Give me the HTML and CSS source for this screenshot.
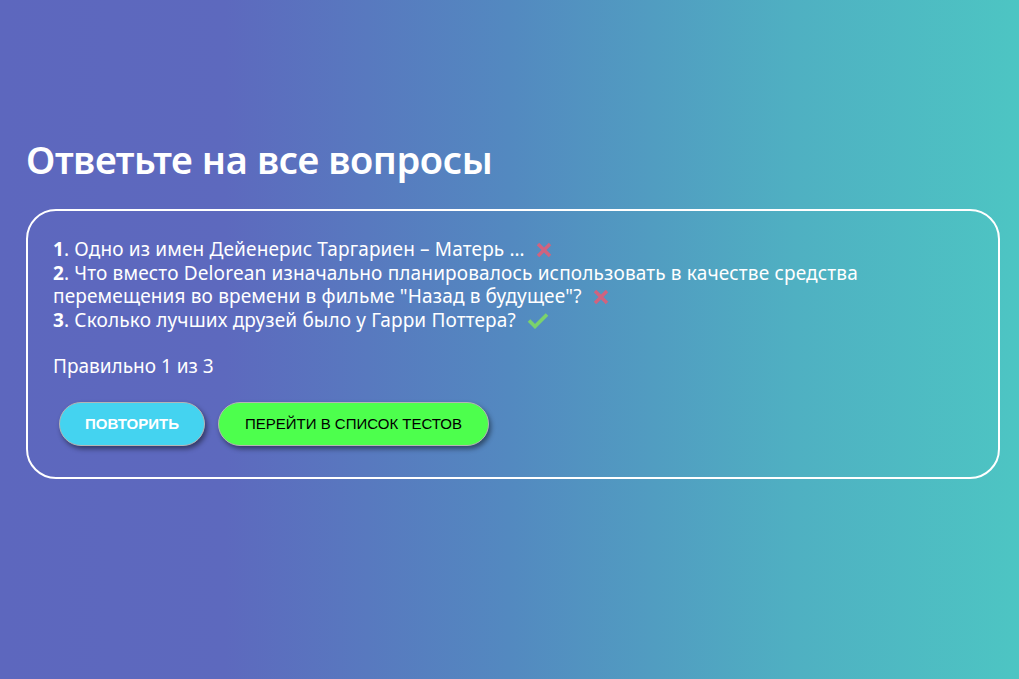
FILE: index.html
```html
<!DOCTYPE html>
<html lang="ru">
<head>
<meta charset="utf-8">
<title>Ответьте на все вопросы</title>
<link rel="stylesheet" href="styles.css">
</head>
<body>
<main class="page">
  <h1 class="title">Ответьте на все вопросы</h1>
  <section class="result">
    <ol class="answers">
      <li><b>1</b>. Одно из имен Дейенерис Таргариен – Матерь … <svg class="mark" viewBox="0 0 16 16" width="16" height="16"><path d="M2 2L14 14M14 2L2 14" stroke="#d0637f" stroke-width="3.4" stroke-linecap="butt"/></svg></li>
      <li><b>2</b>. Что вместо Delorean изначально планировалось использовать в качестве средства перемещения во времени в фильме "Назад в будущее"? <svg class="mark" viewBox="0 0 16 16" width="16" height="16"><path d="M2 2L14 14M14 2L2 14" stroke="#d0637f" stroke-width="3.4" stroke-linecap="butt"/></svg></li>
      <li><b>3</b>. Сколько лучших друзей было у Гарри Поттера? <svg class="mark" viewBox="0 0 22 17" width="22" height="17"><path d="M2 8.5L8 14.5L20 2.5" fill="none" stroke="#7bd36b" stroke-width="3.6"/></svg></li>
    </ol>
    <p class="score">Правильно 1 из 3</p>
    <div class="actions">
      <button class="btn btn-repeat">Повторить</button>
      <button class="btn btn-list">Перейти в список тестов</button>
    </div>
  </section>
</main>
</body>
</html>
```
FILE: styles.css
```css
html, body {
  margin: 0;
  height: 100%;
}
body {
  background: linear-gradient(to right, #5d67be 0%, #5d69be 22%, #5389c0 50%, #4fb0c2 78%, #4dc5c3 100%);
  font-family: "Noto Sans", "Open Sans", sans-serif;
  color: #fff;
}
.page {
  padding: 134px 19px 0 26px;
}
.title {
  margin: 0 0 25px 0;
  font-size: 38px;
  font-weight: 600;
  line-height: 50px;
  letter-spacing: -0.4px;
}
.result {
  border: 2px solid #fff;
  border-radius: 30px;
  padding: 27px 25px 31px 25px;
}
.answers {
  list-style: none;
  margin: 0;
  padding: 0;
  font-size: 19px;
  line-height: 23.7px;
  letter-spacing: 0.15px;
}
.answers b {
  font-weight: 700;
}
.mark {
  vertical-align: -2px;
  margin-left: 6px;
}
.score {
  margin: 21px 0 24px 0;
  font-size: 19px;
  line-height: 24px;
}
.actions {
  display: flex;
  gap: 13px;
  padding-left: 6px;
}
.btn {
  height: 44px;
  border-radius: 22px;
  border: 1px solid #b5b5b5;
  box-shadow: 2px 3px 5px rgba(0, 0, 0, 0.45);
  font-family: "Liberation Sans", Arial, sans-serif;
  font-size: 15px;
  text-transform: uppercase;
  cursor: pointer;
}
.btn-repeat {
  width: 146px;
  background: #44d3f0;
  color: #fff;
  font-weight: 700;
}
.btn-list {
  width: 271px;
  background: #4dff4d;
  color: #000;
  font-weight: 400;
}
```
